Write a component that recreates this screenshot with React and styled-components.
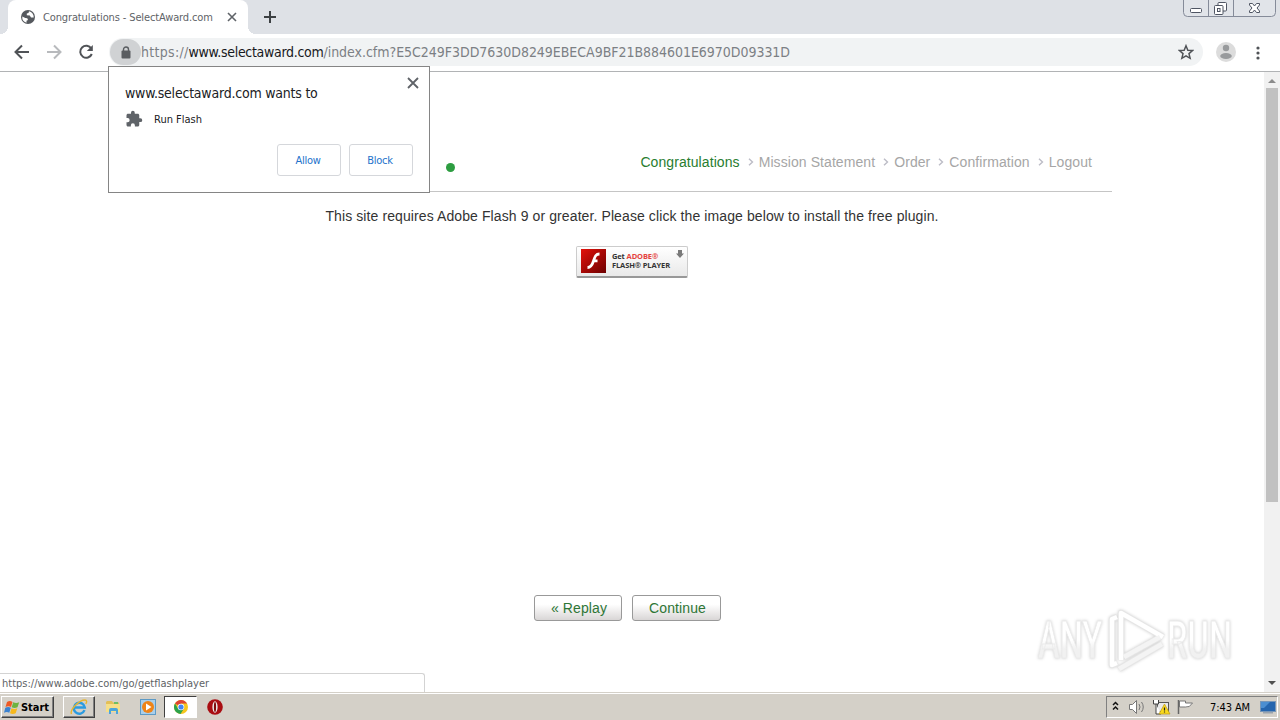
import styled, { createGlobalStyle } from "styled-components";

const steps = ["Congratulations", "Mission Statement", "Order", "Confirmation", "Logout"];

const App = () => {
  return (
    <Screen>
      <GlobalStyle />
      <TabStrip>
        <Tab>
          <GlobeIcon />
          <TabTitle>Congratulations - SelectAward.com</TabTitle>
          <CrossIcon size={10} weight={1.6} />
        </Tab>
        <NewTab>
          <svg width="12" height="12" viewBox="0 0 12 12">
            <path d="M6 0v12M0 6h12" stroke="#3c4043" strokeWidth="2" />
          </svg>
        </NewTab>
        <WindowControls />
      </TabStrip>
      <Toolbar>
        <NavButtons />
        <AddressBar>
          <LockPill>
            <svg width="10" height="13" viewBox="0 0 10 13">
              <path d="M2.500 5V3.500a2.500 2.500 0 0 1 5 0V5" fill="none" stroke="#5a5d61" strokeWidth="1.400" />
              <rect x="0.500" y="4.500" width="9" height="8" rx="1" fill="#5a5d61" />
            </svg>
          </LockPill>
          <Url>
            <UrlPart $spacing="0.3px">https://</UrlPart>
            <UrlHost>www.selectaward.com</UrlHost>
            <UrlPart $spacing="-0.03px">/index.cfm?E5C249F3DD7630D8249EBECA9BF21B884601E6970D09331D</UrlPart>
          </Url>
          <StarIcon />
        </AddressBar>
        <Avatar />
        <MenuDots />
      </Toolbar>

      <Viewport>
        <Page>
          <SiteHeader>
            <LogoDot />
            <Steps>
              {steps.map((step, i) => (
                <Step key={step} $active={i === 0}>
                  {i > 0 && <Chevron />}
                  <span>{step}</span>
                </Step>
              ))}
            </Steps>
          </SiteHeader>
          <Notice>
            This site requires Adobe Flash 9 or greater. Please click the image below to install the free plugin.
          </Notice>
          <FlashBadge />
          <Actions>
            <ActionButton $width={88}>« Replay</ActionButton>
            <ActionButton $width={89}>Continue</ActionButton>
          </Actions>
        </Page>
        <Scrollbar>
          <ArrowUp />
          <Thumb />
          <ArrowDown />
        </Scrollbar>
        <StatusBubble>https://www.adobe.com/go/getflashplayer</StatusBubble>
        <Watermark />
      </Viewport>

      <Prompt>
        <PromptClose>
          <CrossIcon size={12} weight={1.8} />
        </PromptClose>
        <PromptTitle>www.selectaward.com wants to</PromptTitle>
        <PromptRow>
          <svg width="18" height="18" viewBox="0 0 24 24">
            <path
              fill="#5f6368"
              d="M20.500 11H19V7c0-1.100-.9-2-2-2h-4V3.500a2.500 2.500 0 0 0-5 0V5H4c-1.100 0-2 .9-2 2v3.800h1.500a2.700 2.700 0 0 1 0 5.400H2V20c0 1.100.9 2 2 2h3.800v-1.500a2.700 2.700 0 0 1 5.400 0V22H17c1.100 0 2-.9 2-2v-4h1.500a2.500 2.500 0 0 0 0-5z"
            />
          </svg>
          <span>Run Flash</span>
        </PromptRow>
        <PromptActions>
          <PromptButton>Allow</PromptButton>
          <PromptButton>Block</PromptButton>
        </PromptActions>
      </Prompt>

      <Taskbar>
        <StartButton>
          <WindowsFlag />
          Start
        </StartButton>
        <TaskItem $raised $width={32}><ExplorerE /></TaskItem>
        <TaskItem $width={36}><FolderIcon /></TaskItem>
        <TaskItem $width={33}><PlayerIcon /></TaskItem>
        <TaskItem $pressed $width={33}><ChromeIcon /></TaskItem>
        <TaskItem $width={35}><OperaIcon /></TaskItem>
        <Tray>
          <TrayIcons />
          <Clock>7:43 AM</Clock>
          <DesktopIcon />
        </Tray>
      </Taskbar>
    </Screen>
  );
};

const CrossIcon = ({ size, weight }) => (
  <svg width={size} height={size} viewBox={`0 0 ${size} ${size}`}>
    <path
      d={`M1 1L${size - 1} ${size - 1}M${size - 1} 1L1 ${size - 1}`}
      stroke="#5f6368"
      strokeWidth={weight}
    />
  </svg>
);

const GlobeIcon = () => (
  <svg width="14" height="14" viewBox="0 0 14 14">
    <circle cx="7" cy="7" r="7" fill="#55595e" />
    <path d="M1.300 6.500l3 1.500 2 .3.700 1.700-1.500.8v1.900A5.800 5.800 0 0 1 1.300 6.500z" fill="#fff" />
    <path d="M8 1.300L7.500 3 5.800 3.500v1.700l3 .3 1.200 2h2.700A5.800 5.800 0 0 0 8 1.300z" fill="#fff" />
  </svg>
);

const WindowControls = () => (
  <Controls width="93" height="18" viewBox="0 0 93 18">
    <path d="M.5 0v12.500q0 4 4 4h84q4 0 4-4V0" fill="#e1e4e9" stroke="#858b99" />
    <path d="M25.500 0v16M50.500 0v16" stroke="#858b99" />
    <rect x="7.500" y="8.500" width="11" height="4" rx="1" fill="#fff" stroke="#4f5563" />
    <g fill="#fff" stroke="#4f5563">
      <rect x="35" y="2.500" width="8.500" height="8.500" rx="1" />
      <rect x="31.500" y="5.500" width="8.500" height="9" rx="1" />
      <rect x="34.500" y="8.500" width="2.500" height="3" />
      <path d="M66.500 3.500h3l2 2.500 2-2.500h3v1.500L74 8l2.500 3v1.500h-3l-2-2.500-2 2.500h-3V11L69 8l-2.500-3z" />
    </g>
  </Controls>
);

const NavButtons = () => (
  <Nav width="109" height="32" viewBox="0 0 109 32" fill="none" strokeWidth="2">
    <path d="M29 16H16.500M22 9.500L15.500 16l6.500 6.500" stroke="#505357" />
    <path d="M47 16h12.500M54 9.500l6.500 6.500-6.500 6.500" stroke="#b8babd" />
    <path d="M91.300 12.500A6 6 0 1 0 91.800 18" stroke="#505357" />
    <path d="M92.800 9v6h-6z" fill="#505357" />
  </Nav>
);

const StarIcon = () => (
  <svg width="16" height="16" viewBox="0 0 14 14">
    <path
      d="M7 1.500l1.600 3.900 4.200.3-3.200 2.700 1 4.100L7 10.300l-3.600 2.200 1-4.100L1.200 5.700l4.200-.3z"
      fill="none"
      stroke="#505357"
      strokeWidth="1.300"
    />
  </svg>
);

const Avatar = () => (
  <AvatarIcon width="20" height="20" viewBox="0 0 20 20">
    <circle cx="10" cy="10" r="10" fill="#dcdcdc" />
    <circle cx="10" cy="6" r="3.200" fill="#989a9c" />
    <ellipse cx="10" cy="14" rx="5.800" ry="3" fill="#989a9c" />
  </AvatarIcon>
);

const MenuDots = () => (
  <svg width="4" height="14" viewBox="0 0 4 14" fill="#505357">
    <circle cx="2" cy="2" r="1.600" />
    <circle cx="2" cy="7" r="1.600" />
    <circle cx="2" cy="12" r="1.600" />
  </svg>
);

const Chevron = () => (
  <svg width="6" height="8" viewBox="0 0 6 8">
    <path d="M1 .7L4.500 4 1 7.300" fill="none" stroke="#bcbcc6" strokeWidth="1.400" />
  </svg>
);

const FlashBadge = () => (
  <Badge>
    <svg width="25" height="24" viewBox="0 0 25 24">
      <defs>
        <linearGradient id="flash" x2="1" y2="1">
          <stop offset="0" stopColor="#e3120b" />
          <stop offset="1" stopColor="#6d0000" />
        </linearGradient>
      </defs>
      <rect width="25" height="24" fill="url(#flash)" />
      <path d="M18.500 5c-4 0-4.700 3-6 7-1.200 3.700-2.500 6.500-6 6.500M11.500 11.800h5" fill="none" stroke="#fff" strokeWidth="2.800" />
    </svg>
    <BadgeText>
      <div>Get <em>ADOBE®</em></div>
      <div>FLASH® PLAYER</div>
    </BadgeText>
    <BadgeArrow width="8" height="8" viewBox="0 0 8 8">
      <path d="M2 0h4v3.500h2L4 8 0 3.500h2z" fill="#7a7a7a" />
    </BadgeArrow>
  </Badge>
);

const Watermark = () => (
  <WatermarkSvg width="208" height="72" viewBox="0 0 208 72">
    <defs>
      <linearGradient id="letters" x2="0" y2="1">
        <stop offset="0.5" stopColor="#fff" />
        <stop offset="0.65" stopColor="#f1f1f1" />
      </linearGradient>
    </defs>
    <g fill="url(#letters)" stroke="#ebebeb" fontFamily="Roboto, sans-serif" fontSize="51" fontWeight="500">
      <text transform="translate(2 51) scale(0.64 1)">ANY</text>
      <text transform="translate(131 51) scale(0.64 1)">RUN</text>
    </g>
    <g fill="none" strokeLinejoin="round">
      <path d="M81 10l-5 2v46l5-2M85 53V6l42 24M88 50l36-20M83 62l43-25" stroke="#e6e6e6" strokeWidth="6.5" />
      <path d="M81 10l-5 2v46l5-2M85 53V6l42 24" stroke="#fff" strokeWidth="4.500" />
      <path d="M88 50l36-20M83 62l43-25" stroke="#f4f4f4" strokeWidth="4.500" />
    </g>
  </WatermarkSvg>
);

const WindowsFlag = () => (
  <svg width="16" height="15" viewBox="0 0 16 15">
    <path d="M3 2q3-2 5.500 0L7 7Q4.500 5.500 1.500 7z" fill="#ee5a24" />
    <path d="M9.200 2.300q3 1.500 6 0L13.500 7.300q-3 1.500-5.800 0z" fill="#6db33f" />
    <path d="M1.300 7.800q3-1.500 5.500 0l-1.500 5Q2.800 11.300 0 12.800z" fill="#3b82d0" />
    <path d="M7.500 8.200q3 1.500 5.800 0l-1.600 5q-3 1.500-5.700 0z" fill="#f6b81c" />
  </svg>
);

const ExplorerE = () => (
  <svg width="18" height="18" viewBox="0 0 18 18">
    <path d="M14.500 12.200A5.500 5.500 0 1 1 14.800 9.500H5" fill="none" stroke="#2b9be0" strokeWidth="2.400" />
    <path d="M1.500 16C-.5 12 9 2 15 2c2 0 2 2 .8 4" fill="none" stroke="#e8b52d" strokeWidth="1.400" />
  </svg>
);

const FolderIcon = () => (
  <svg width="16" height="16" viewBox="0 0 16 16">
    <path d="M1 3l1-1h5l1 1.500h6V13H1z" fill="#e3bf58" />
    <path d="M1 5h14v8H1z" fill="#f6df88" />
    <path d="M4 15v-4q0-2 2-2h5q2 0 2 2v4h-2v-3H6v3z" fill="#4ca5da" />
    <path d="M9 3h4v2H9z" fill="#6fbe65" />
  </svg>
);

const PlayerIcon = () => (
  <svg width="16" height="16" viewBox="0 0 16 16">
    <rect x=".5" y=".5" width="15" height="15" fill="#a9cfeb" stroke="#5d9ac5" />
    <circle cx="8" cy="8" r="6" fill="#ef8418" />
    <path d="M6 4.500L11.500 8 6 11.500z" fill="#fff" />
  </svg>
);

const ChromeIcon = () => (
  <svg width="14" height="14" viewBox="0 0 14 14">
    <circle cx="7" cy="7" r="7" fill="#f6c61d" />
    <path d="M7 7L1 3.400A7 7 0 0 1 13.100 3.600L7 3.600z" fill="#de4434" />
    <path d="M1 3.400A7 7 0 0 0 6.500 14L9.700 9 4 8.500z" fill="#2ba24c" />
    <circle cx="7" cy="7" r="3.300" fill="#fff" />
    <circle cx="7" cy="7" r="2.600" fill="#4285f4" />
  </svg>
);

const OperaIcon = () => (
  <svg width="16" height="16" viewBox="0 0 16 16">
    <circle cx="8" cy="8" r="7.800" fill="#a90d12" />
    <ellipse cx="8" cy="8" rx="2.600" ry="5.800" fill="#eee" />
    <ellipse cx="8" cy="8" rx="1.100" ry="5" fill="#7f0b0b" />
  </svg>
);

const TrayIcons = () => (
  <svg width="88" height="20" viewBox="0 0 88 20">
    <path d="M6 8l2.500-2.500L11 8M6 12.500L8.500 10l2.500 2.500" fill="none" stroke="#111" strokeWidth="1.500" />
    <g fill="#fff" stroke="#777">
      <path d="M22.500 7.500h3l4-4v13l-4-4h-3z" />
      <path d="M32 7q2 3 0 6M34.500 5q3.500 5 0 10" fill="none" />
    </g>
    <rect x="50.500" y="5.500" width="11" height="9" fill="#e8e8e8" stroke="#555" />
    <path d="M46.500 3v4h5V3M49 7v10h5" fill="#fff" stroke="#444" />
    <path d="M57.500 7L63 17H52z" fill="#f9d91d" stroke="#bd9a15" strokeWidth=".7" />
    <path d="M57.500 10.500v3M57.500 14.500v1" stroke="#222" strokeWidth="1.200" />
    <path d="M71.500 3v14" stroke="#666" strokeWidth="1.500" />
    <path d="M72.500 4h6v2h7q-3 5-7 4h-6z" fill="#fff" stroke="#777" />
  </svg>
);

const DesktopIcon = () => (
  <svg width="16" height="13" viewBox="0 0 16 13">
    <rect x=".5" y=".5" width="15" height="10" fill="#2565ae" stroke="#7796b8" />
    <path d="M1 1h9L4 7H1z" fill="#4b8ed1" />
    <path d="M3 11h10v1.500H3z" fill="#9aa3ad" />
  </svg>
);

const GlobalStyle = createGlobalStyle`
  * {
    box-sizing: border-box;
  }
  body {
    margin: 0;
    background: #fff;
  }
  svg {
    display: block;
    flex-shrink: 0;
  }
`;

const ui = `"DejaVu Sans Condensed", "DejaVu Sans", sans-serif`;
const arial = `"Liberation Sans", Arial, sans-serif`;

const Screen = styled.div`
  position: relative;
  display: flex;
  flex-direction: column;
  width: 1280px;
  height: 720px;
  overflow: hidden;
  font-family: ${ui};
  white-space: nowrap;
`;

const TabStrip = styled.div`
  display: flex;
  height: 34px;
  padding-left: 8px;
  background: #dee1e6;
`;

const Tab = styled.div`
  position: relative;
  display: flex;
  align-items: center;
  width: 240px;
  padding: 0 11px 0 13px;
  border-radius: 8px 8px 0 0;
  background: #fff;

  &::before,
  &::after {
    content: "";
    position: absolute;
    bottom: 0;
    width: 8px;
    height: 8px;
  }
  &::before {
    left: -8px;
    background: radial-gradient(circle at 0 0, #dee1e6 8px, #fff 8px);
  }
  &::after {
    right: -8px;
    background: radial-gradient(circle at 100% 0, #dee1e6 8px, #fff 8px);
  }
`;

const TabTitle = styled.span`
  flex: 1;
  margin-left: 8px;
  font-size: 11px;
  letter-spacing: -0.13px;
  color: #606367;
`;

const NewTab = styled.div`
  display: flex;
  align-items: center;
  margin-left: 16px;
`;

const Controls = styled.svg`
  margin: 0 4px 0 auto;
`;

const Toolbar = styled.div`
  display: flex;
  align-items: center;
  height: 38px;
  padding-right: 20px;
  border-bottom: 1px solid #b1b3b5;
`;

const Nav = styled.svg`
  margin-top: -2px;
`;

const AddressBar = styled.div`
  flex: none;
  display: flex;
  align-items: center;
  width: 1094px;
  height: 28px;
  margin-top: -1px;
  padding: 0 9px 0 1px;
  border-radius: 14px;
  background: #f1f3f4;
`;

const LockPill = styled.div`
  display: flex;
  align-items: center;
  justify-content: center;
  width: 31px;
  height: 26px;
  border-radius: 13px;
  background: #d0d2d4;
`;

const Url = styled.div`
  display: flex;
  flex: 1;
  font-size: 14px;
`;

const UrlPart = styled.span`
  letter-spacing: ${({ $spacing }) => $spacing};
  color: #7c8084;
`;

const UrlHost = styled.span`
  letter-spacing: -0.3px;
  color: #17191c;
`;

const AvatarIcon = styled.svg`
  margin: -1px 20px 0 13px;
`;

const Viewport = styled.div`
  position: relative;
  display: flex;
  height: 620px;
`;

const Page = styled.div`
  flex: 1;
  display: flex;
  flex-direction: column;
  align-items: center;
  font-family: ${arial};
`;

const SiteHeader = styled.div`
  display: flex;
  align-items: center;
  justify-content: space-between;
  width: 960px;
  height: 120px;
  padding: 61px 20px 0 294px;
  border-bottom: 1px solid #c5c5c5;
`;

const LogoDot = styled.div`
  width: 9px;
  height: 9px;
  margin-top: 11px;
  border-radius: 50%;
  background: #2d9d41;
`;

const Steps = styled.div`
  display: flex;
`;

const Step = styled.div`
  display: flex;
  align-items: center;
  gap: 5px;
  margin-left: 8px;
  font-size: 14px;
  letter-spacing: 0.08px;
  color: ${({ $active }) => ($active ? "#287d30" : "#a6a6a6")};
`;

const Notice = styled.p`
  margin: 16px 0 0;
  font-size: 14px;
  line-height: 17px;
  letter-spacing: 0.1px;
  color: #333;
`;

const Badge = styled.div`
  position: relative;
  display: flex;
  align-items: center;
  gap: 6px;
  width: 112px;
  height: 32px;
  margin-top: 21px;
  padding: 0 0 1px 4px;
  border: 1px solid #ccc;
  border-bottom: 2px solid #989898;
  border-radius: 2px;
  background: linear-gradient(#fff, #e9e9e9);
`;

const BadgeText = styled.div`
  font-family: "Open Sans", sans-serif;
  font-size: 7.5px;
  font-weight: 700;
  line-height: 9px;
  letter-spacing: -0.12px;
  color: #333;

  em {
    font-style: normal;
    color: #e5423d;
  }
`;

const BadgeArrow = styled.svg`
  position: absolute;
  top: 3px;
  right: 3px;
`;

const Actions = styled.div`
  display: flex;
  gap: 10px;
  margin: 317px 9px 0 0;
`;

const ActionButton = styled.button`
  width: ${({ $width }) => $width}px;
  height: 26px;
  padding: 0 0 0 2px;
  border: 1px solid #999;
  border-radius: 3px;
  background: linear-gradient(#fff 35%, #d9d6d6);
  font-family: ${arial};
  font-size: 14px;
  letter-spacing: 0.1px;
  color: #2e7636;
`;

const Scrollbar = styled.div`
  display: flex;
  flex-direction: column;
  align-items: center;
  width: 16px;
  padding: 7px 0;
  background: #f1f1f1;
`;

const ArrowUp = styled.div`
  border: 4px solid transparent;
  border-top: 0;
  border-bottom-color: #8b8b8b;
`;

const ArrowDown = styled.div`
  margin-top: auto;
  border: 4px solid transparent;
  border-bottom: 0;
  border-top-color: #505050;
`;

const Thumb = styled.div`
  width: 12px;
  height: 414px;
  margin-top: 5px;
  background: #c1c1c1;
`;

const StatusBubble = styled.div`
  position: absolute;
  left: 0;
  bottom: 0;
  width: 425px;
  height: 19px;
  padding-left: 2px;
  border: solid #d3d3d3;
  border-width: 1px 1px 0 0;
  border-radius: 0 3px 0 0;
  background: #fff;
  font-size: 11px;
  line-height: 19px;
  color: #606366;
`;

const WatermarkSvg = styled.svg`
  position: absolute;
  top: 535px;
  left: 1036px;
  filter: drop-shadow(0 0 1.5px #d0d0d0);
`;

const Prompt = styled.div`
  position: absolute;
  top: 66px;
  left: 108px;
  width: 322px;
  height: 127px;
  padding: 17px 16px 0;
  border: 1px solid #858585;
  background: #fff;
`;

const PromptClose = styled.div`
  position: absolute;
  top: 10px;
  right: 10px;
`;

const PromptTitle = styled.div`
  font-size: 14px;
  line-height: 18px;
  letter-spacing: -0.22px;
  color: #202124;
`;

const PromptRow = styled.div`
  display: flex;
  align-items: center;
  gap: 11px;
  margin-top: 8px;
  font-size: 11px;
  color: #202124;
`;

const PromptActions = styled.div`
  display: flex;
  justify-content: flex-end;
  gap: 8px;
  margin-top: 16px;
`;

const PromptButton = styled.button`
  width: 64px;
  height: 32px;
  padding: 0 2px 0 0;
  border: 1px solid #d5d7db;
  border-radius: 3px;
  background: #fff;
  font-family: ${ui};
  font-size: 11px;
  letter-spacing: -0.3px;
  color: #2372cb;
`;

const Taskbar = styled.div`
  display: flex;
  align-items: center;
  height: 28px;
  padding: 1px 2px 0 1px;
  border-top: 1px solid #d4d0c8;
  box-shadow: inset 0 1px #fff;
  background: #d4d0c8;
`;

const StartButton = styled.div`
  display: flex;
  align-items: center;
  gap: 1px;
  width: 53px;
  height: 22px;
  margin-right: 9px;
  padding-left: 2px;
  border: 1px solid;
  border-color: #fff #404040 #404040 #fff;
  box-shadow: inset -1px -1px #808080;
  font-size: 11px;
  font-weight: 700;
  letter-spacing: -0.05px;
  color: #000;
`;

const TaskItem = styled.div`
  display: flex;
  align-items: center;
  justify-content: center;
  width: ${({ $width }) => $width}px;
  height: 22px;
  border: 1px solid transparent;
  ${({ $raised }) => $raised && `
    border-color: #fff #404040 #404040 #fff;
    box-shadow: inset -1px -1px #808080;
  `}
  ${({ $pressed }) => $pressed && `
    border-color: #404040 #fff #fff #404040;
    background: #fff;
  `}
`;

const Tray = styled.div`
  display: flex;
  align-items: center;
  width: 172px;
  height: 22px;
  margin-left: auto;
  padding-right: 1px;
  border: 1px solid;
  border-color: #808080 #fff #fff #808080;
`;

const Clock = styled.span`
  margin: 0 10px 0 auto;
  font-size: 11px;
  letter-spacing: -0.1px;
  color: #000;
`;

export default App;
